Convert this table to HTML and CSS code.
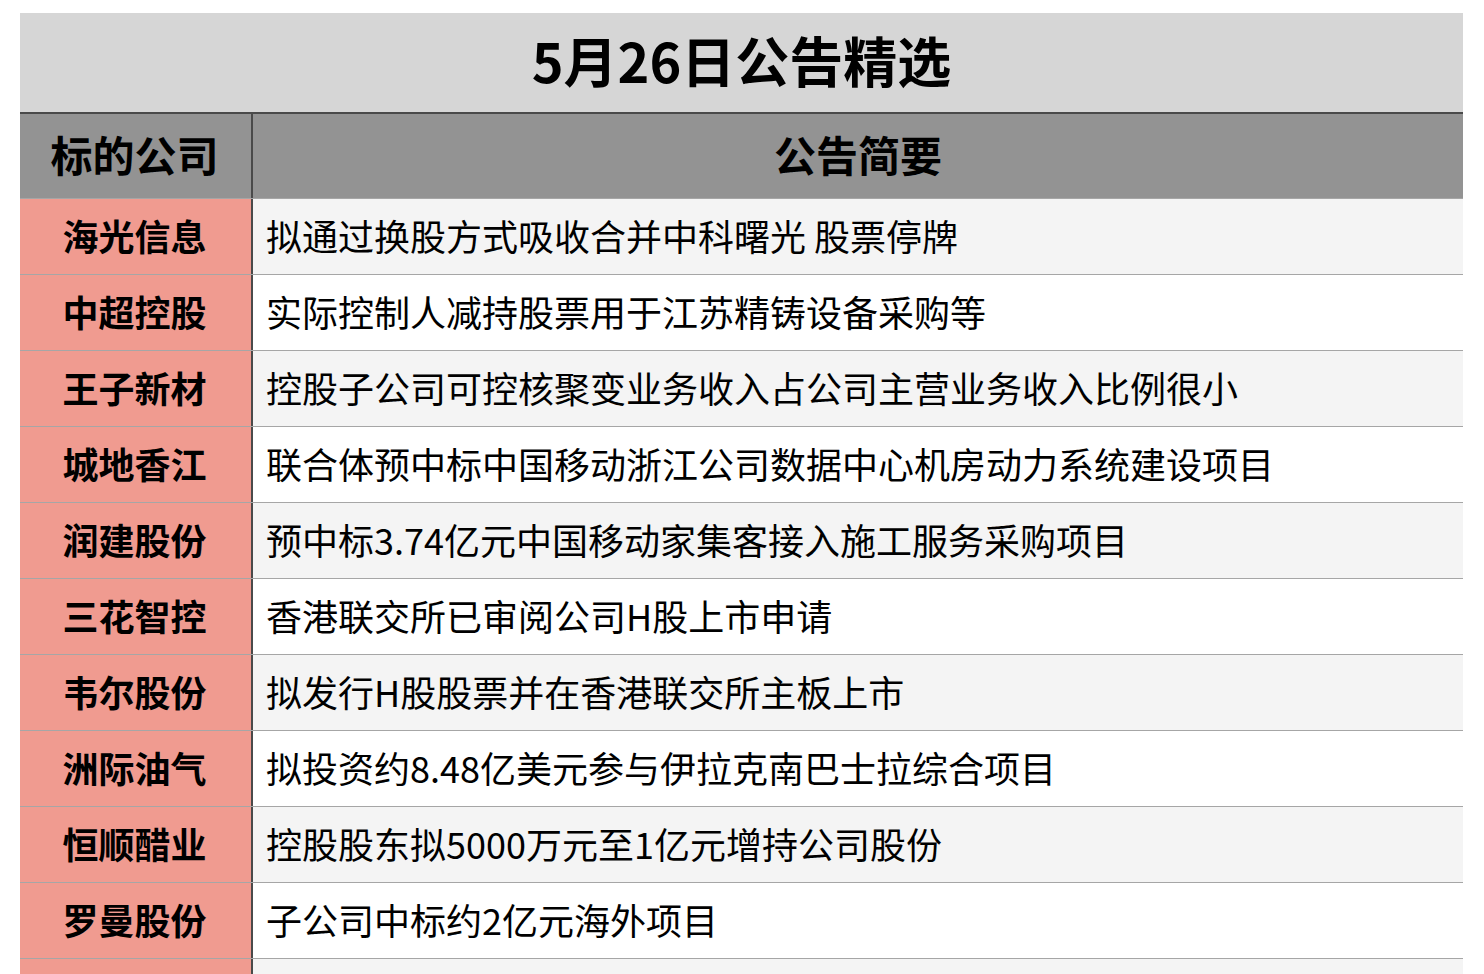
FILE: index.html
```html
<!DOCTYPE html>
<html lang="zh-CN">
<head>
<meta charset="utf-8">
<title>5月26日公告精选</title>
<link rel="stylesheet" href="styles.css">
</head>
<body>
<div class="sheet">
  <div class="title">5月26日公告精选</div>
  <div class="row head">
    <div class="name">标的公司</div>
    <div class="desc">公告简要</div>
  </div>
  <div class="row odd"><div class="name">海光信息</div><div class="desc">拟通过换股方式吸收合并中科曙光 股票停牌</div></div>
  <div class="row"><div class="name">中超控股</div><div class="desc">实际控制人减持股票用于江苏精铸设备采购等</div></div>
  <div class="row odd"><div class="name">王子新材</div><div class="desc">控股子公司可控核聚变业务收入占公司主营业务收入比例很小</div></div>
  <div class="row"><div class="name">城地香江</div><div class="desc">联合体预中标中国移动浙江公司数据中心机房动力系统建设项目</div></div>
  <div class="row odd"><div class="name">润建股份</div><div class="desc">预中标3.74亿元中国移动家集客接入施工服务采购项目</div></div>
  <div class="row"><div class="name">三花智控</div><div class="desc">香港联交所已审阅公司H股上市申请</div></div>
  <div class="row odd"><div class="name">韦尔股份</div><div class="desc">拟发行H股股票并在香港联交所主板上市</div></div>
  <div class="row"><div class="name">洲际油气</div><div class="desc">拟投资约8.48亿美元参与伊拉克南巴士拉综合项目</div></div>
  <div class="row odd"><div class="name">恒顺醋业</div><div class="desc">控股股东拟5000万元至1亿元增持公司股份</div></div>
  <div class="row"><div class="name">罗曼股份</div><div class="desc">子公司中标约2亿元海外项目</div></div>
  <div class="row odd"><div class="name"></div><div class="desc"></div></div>
</div>
</body>
</html>
```
FILE: styles.css
```css
html {
  overflow: hidden;
}
body {
  margin: 0;
  background: #ffffff;
  font-family: "Noto Sans CJK SC", "Noto Sans", sans-serif;
  color: #000000;
}
.sheet {
  margin: 13px 0 0 20px;
  width: 1443px;
  display: flex;
  flex-direction: column;
}
.title {
  height: 101px;
  box-sizing: border-box;
  background: #d6d6d6;
  border-bottom: 2px solid #4a4a4a;
  display: flex;
  align-items: center;
  justify-content: center;
  font-size: 54px;
  font-weight: 700;
  padding-bottom: 6px;
}
.row {
  display: flex;
  height: 76px;
  box-sizing: border-box;
  border-bottom: 1px solid #a6a6a6;
  background: #ffffff;
}
.row.odd {
  background: #f4f4f4;
}
.row.head {
  height: 85px;
  background: #939393;
}
.name {
  width: 233px;
  flex: none;
  background: #f09b90;
  border-right: 2px solid #4a4a4a;
  display: flex;
  align-items: center;
  justify-content: center;
  font-size: 36px;
  font-weight: 700;
  padding: 0 2px 4px 0;
  box-sizing: border-box;
}
.desc {
  flex: 1;
  display: flex;
  align-items: center;
  padding: 0 0 4px 13px;
  font-size: 36px;
  font-weight: 400;
  white-space: nowrap;
}
.head .name {
  background: #939393;
  font-size: 42px;
  padding-bottom: 5px;
}
.head .desc {
  justify-content: center;
  padding: 0 0 5px 0;
  font-size: 42px;
  font-weight: 700;
}
```
